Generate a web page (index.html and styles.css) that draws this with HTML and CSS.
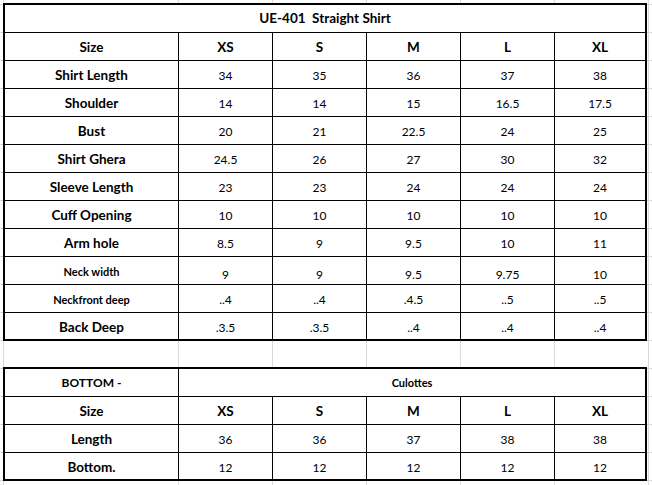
FILE: index.html
```html
<!DOCTYPE html>
<html lang="en">
<head>
<meta charset="utf-8">
<title>UE-401 Straight Shirt size chart</title>
<link rel="stylesheet" href="styles.css">
</head>
<body>
<div class="sheet">
  <table class="size-table">
    <colgroup>
      <col class="c-label"><col class="c-size"><col class="c-size"><col class="c-size"><col class="c-size"><col class="c-last">
    </colgroup>
    <tr class="title"><td colspan="6">UE-401&nbsp; Straight Shirt</td></tr>
    <tr class="head"><th>Size</th><th>XS</th><th>S</th><th>M</th><th>L</th><th>XL</th></tr>
    <tr><th>Shirt Length</th><td>34</td><td>35</td><td>36</td><td>37</td><td>38</td></tr>
    <tr><th>Shoulder</th><td>14</td><td>14</td><td>15</td><td>16.5</td><td>17.5</td></tr>
    <tr><th>Bust</th><td>20</td><td>21</td><td>22.5</td><td>24</td><td>25</td></tr>
    <tr><th>Shirt Ghera</th><td>24.5</td><td>26</td><td>27</td><td>30</td><td>32</td></tr>
    <tr><th>Sleeve Length</th><td>23</td><td>23</td><td>24</td><td>24</td><td>24</td></tr>
    <tr><th>Cuff Opening</th><td>10</td><td>10</td><td>10</td><td>10</td><td>10</td></tr>
    <tr><th>Arm hole</th><td>8.5</td><td>9</td><td>9.5</td><td>10</td><td>11</td></tr>
    <tr class="low"><th class="small">Neck width</th><td>9</td><td>9</td><td>9.5</td><td>9.75</td><td>10</td></tr>
    <tr><th class="small">Neckfront deep</th><td>..4</td><td>..4</td><td>.4.5</td><td>..5</td><td>..5</td></tr>
    <tr class="last"><th>Back Deep</th><td>.3.5</td><td>.3.5</td><td>..4</td><td>..4</td><td>..4</td></tr>
  </table>

  <table class="size-table bottom-table">
    <colgroup>
      <col class="c-label"><col class="c-size"><col class="c-size"><col class="c-size"><col class="c-size"><col class="c-last">
    </colgroup>
    <tr><th class="mid">BOTTOM -</th><td colspan="5" class="small-bold">Culottes</td></tr>
    <tr class="head"><th>Size</th><th>XS</th><th>S</th><th>M</th><th>L</th><th>XL</th></tr>
    <tr><th>Length</th><td>36</td><td>36</td><td>37</td><td>38</td><td>38</td></tr>
    <tr class="last"><th>Bottom.</th><td>12</td><td>12</td><td>12</td><td>12</td><td>12</td></tr>
  </table>
</div>
</body>
</html>
```

FILE: styles.css
```css
html, body {
  margin: 0;
  padding: 0;
  background: #fff;
}

.sheet {
  width: 652px;
  height: 485px;
  box-sizing: border-box;
  padding: 3px 0 0 3px;
  overflow: hidden;
  background-color: #fff;
  background-image:
    repeating-linear-gradient(to right, #d9d9d9 0 1px, transparent 1px 94px),
    linear-gradient(#d9d9d9, #d9d9d9),
    repeating-linear-gradient(to bottom, #d9d9d9 0 1px, transparent 1px 28px);
  background-size: 471px 100%, 1px 100%, 100% 100%;
  background-position: 178px 0, 3px 0, 0 4px;
  background-repeat: no-repeat, no-repeat, repeat;
  font-family: Lato, "Open Sans", sans-serif;
  color: #000;
}

.size-table {
  border-collapse: separate;
  border-spacing: 0;
  border: 2px solid #000;
  table-layout: fixed;
  width: 644px;
  background: #fff;
}

.bottom-table {
  margin-top: 26px;
}

.c-label { width: 174px; }
.c-size { width: 94px; }
.c-last { width: 90px; }

.size-table td,
.size-table th {
  box-sizing: border-box;
  height: 28px;
  padding: 3px 0 0;
  border-right: 1px solid #000;
  border-bottom: 1px solid #000;
  text-align: center;
  vertical-align: middle;
  white-space: nowrap;
  line-height: 1;
}

.size-table td:last-child,
.size-table th:last-child {
  border-right: none;
}

.size-table .last td,
.size-table .last th {
  border-bottom: none;
  height: 26px;
  padding-top: 3px;
}

.size-table th {
  font-weight: 700;
  font-size: 13.5px;
}

.size-table td {
  font-weight: 400;
  font-size: 12px;
}

.size-table .title td {
  font-weight: 700;
  font-size: 13.5px;
  padding-top: 1px;
}

.size-table th.small {
  font-size: 11px;
  padding-top: 1px;
}

.size-table .low td {
  vertical-align: bottom;
  padding: 0 0 3px;
}

.size-table th.mid {
  font-size: 12px;
  padding-top: 0;
}

.size-table td.small-bold {
  font-weight: 700;
  font-size: 11px;
  padding-top: 0;
}
```
